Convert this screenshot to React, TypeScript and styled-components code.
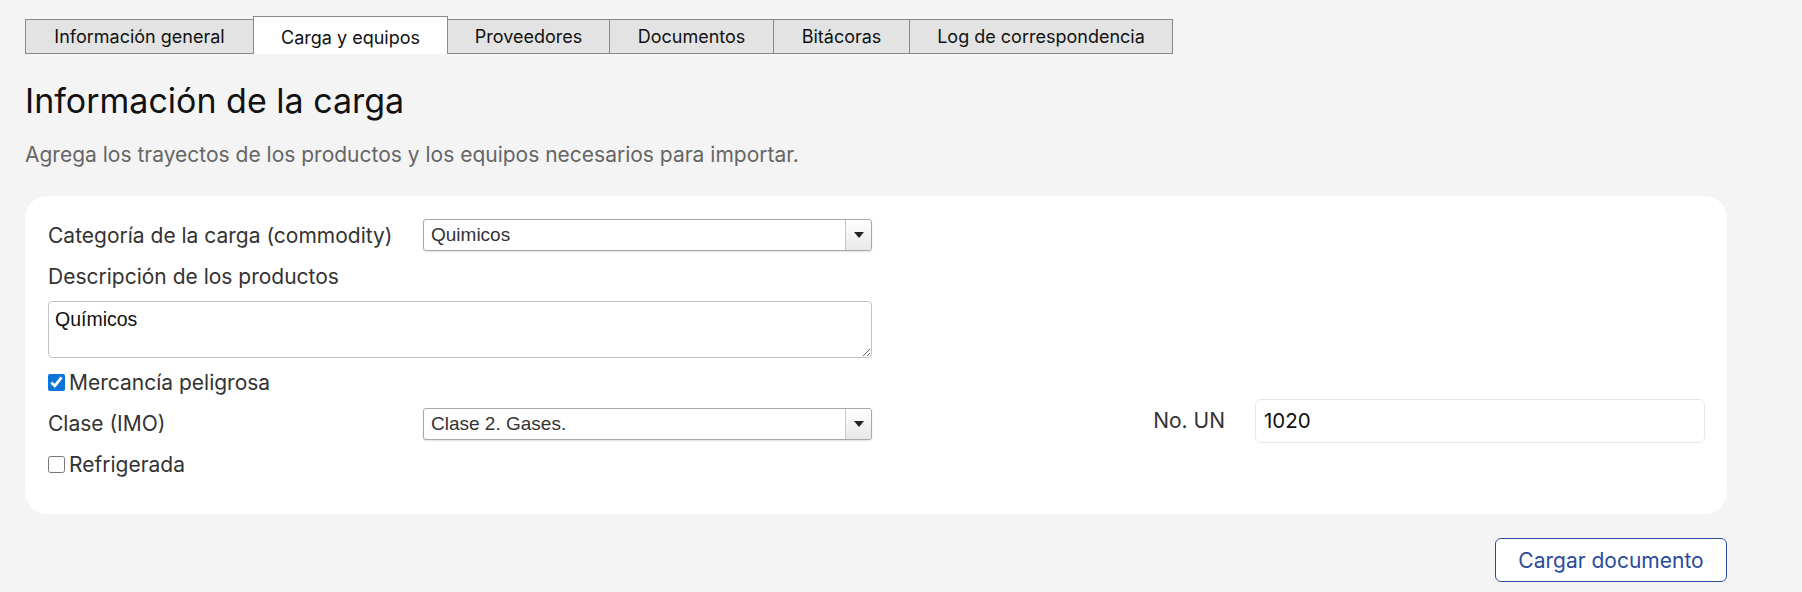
import React from 'react'
import styled, { createGlobalStyle } from 'styled-components'

const GlobalStyle = createGlobalStyle`
  body {
    margin: 0;
    background: #f4f4f4;
    font-family: Inter, "Noto Sans", sans-serif;
  }
`

const tabs = [
    { label: 'Información general', width: 229 },
    { label: 'Carga y equipos', width: 195, active: true },
    { label: 'Proveedores', width: 163 },
    { label: 'Documentos', width: 165 },
    { label: 'Bitácoras', width: 137 },
    { label: 'Log de correspondencia', width: 264 },
]

const App = () => {
    return (
        <Page>
            <GlobalStyle />
            <TabBar>
                {tabs.map((tab) => (
                    <Tab key={tab.label} $active={!!tab.active} $width={tab.width}>
                        {tab.label}
                    </Tab>
                ))}
            </TabBar>
            <Title>Información de la carga</Title>
            <Subtitle>Agrega los trayectos de los productos y los equipos necesarios para importar.</Subtitle>
            <Card>
                <Row>
                    <Field>
                        <Label>Categoría de la carga (commodity)</Label>
                        <Select>
                            <SelectValue>Quimicos</SelectValue>
                            <SelectArrow><Caret /></SelectArrow>
                        </Select>
                    </Field>
                </Row>
                <BlockLabel>Descripción de los productos</BlockLabel>
                <TextArea defaultValue="Químicos" />
                <CheckRow $top={11.5}>
                    <Check type="checkbox" defaultChecked />
                    Mercancía peligrosa
                </CheckRow>
                <Row $top={4}>
                    <Field $drop={6}>
                        <Label>Clase (IMO)</Label>
                        <Select>
                            <SelectValue>Clase 2. Gases.</SelectValue>
                            <SelectArrow><Caret /></SelectArrow>
                        </Select>
                    </Field>
                    <Spacer />
                    <SideLabel>No. UN</SideLabel>
                    <Input defaultValue="1020" />
                </Row>
                <CheckRow $top={9.5}>
                    <Check type="checkbox" />
                    Refrigerada
                </CheckRow>
            </Card>
            <Actions>
                <OutlineButton>Cargar documento</OutlineButton>
            </Actions>
        </Page>
    )
}

const Page = styled.div`
  padding: 16px 75px 0 25px;
`
const TabBar = styled.div`
  display: flex;
  align-items: flex-end;
  height: 38px;
`
const Tab = styled.div<{ $active: boolean; $width: number }>`
  box-sizing: border-box;
  width: ${(p) => p.$width}px;
  height: ${(p) => (p.$active ? 38 : 35)}px;
  display: flex;
  align-items: center;
  justify-content: center;
  padding-top: ${(p) => (p.$active ? 3 : 0)}px;
  font-size: 18px;
  color: #111;
  background: ${(p) => (p.$active ? '#ffffff' : '#e3e3e3')};
  border: 1px solid #8a8a8a;
  border-bottom: ${(p) => (p.$active ? 'none' : '1px solid #8a8a8a')};
  margin-left: -1px;
  &:first-child {
    margin-left: 0;
  }
`
const Title = styled.h1`
  margin: 26px 0 0;
  font-size: 34px;
  font-weight: 400;
  color: #111;
  line-height: 41px;
`
const Subtitle = styled.p`
  margin: 21px 0 0;
  font-size: 21px;
  color: #666;
  line-height: 25px;
`
const Card = styled.div`
  margin-top: 29px;
  background: #fff;
  border-radius: 22px;
  padding: 23px 22px 37px 23px;
`
const Row = styled.div<{ $top?: number }>`
  display: flex;
  align-items: center;
  margin-top: ${(p) => p.$top ?? 0}px;
`
const Field = styled.div<{ $drop?: number }>`
  display: flex;
  align-items: center;
  padding-top: ${(p) => p.$drop ?? 0}px;
`
const Label = styled.div`
  width: 375px;
  font-size: 21px;
  color: #333;
`
const Select = styled.div`
  box-sizing: border-box;
  width: 449px;
  height: 32px;
  display: flex;
  border: 1px solid #a8a8a8;
  border-radius: 3px;
  box-shadow: 0 1px 2px rgba(0, 0, 0, 0.12);
  background: #fff;
`
const SelectValue = styled.div`
  flex: 1;
  display: flex;
  align-items: center;
  padding-left: 7px;
  font-family: "Liberation Sans", Arial, sans-serif;
  font-size: 19px;
  color: #333;
`
const SelectArrow = styled.div`
  width: 25px;
  display: flex;
  align-items: center;
  justify-content: center;
  border-left: 1px solid #c8c8c8;
  background: linear-gradient(#fff, #e8e8e8);
  border-radius: 0 3px 3px 0;
`
const Caret = styled.span`
  width: 0;
  height: 0;
  border-left: 5px solid transparent;
  border-right: 5px solid transparent;
  border-top: 6px solid #222;
`
const BlockLabel = styled.div`
  margin-top: 13px;
  font-size: 21px;
  color: #333;
  line-height: 25px;
`
const TextArea = styled.textarea`
  box-sizing: border-box;
  display: block;
  margin-top: 11.5px;
  width: 824px;
  height: 57.5px;
  padding: 6px 6px;
  border: 1px solid #c4c4c4;
  border-radius: 4px;
  font-family: "Liberation Sans", Arial, sans-serif;
  font-size: 19.5px;
  color: #111;
  resize: vertical;
  outline: none;
`
const CheckRow = styled.label<{ $top: number }>`
  display: flex;
  align-items: center;
  gap: 4px;
  margin-top: ${(p) => p.$top}px;
  font-size: 21px;
  color: #333;
  line-height: 25px;
`
const Check = styled.input`
  width: 17px;
  height: 17px;
  margin: 0;
  accent-color: #0b75d9;
`
const Spacer = styled.div`
  flex: 1;
`
const SideLabel = styled.div`
  font-size: 21px;
  color: #333;
  margin-right: 30px;
`
const Input = styled.input`
  box-sizing: border-box;
  width: 450px;
  height: 44px;
  padding: 0 8px;
  border: 1px solid #e6e6e6;
  border-radius: 6px;
  font-family: Inter, sans-serif;
  font-size: 20.5px;
  color: #111;
  outline: none;
`
const Actions = styled.div`
  display: flex;
  justify-content: flex-end;
  margin-top: 24px;
`
const OutlineButton = styled.button`
  box-sizing: border-box;
  width: 232px;
  height: 44px;
  background: #fff;
  border: 1px solid #2b4a9c;
  border-radius: 6px;
  font-family: Inter, sans-serif;
  font-size: 21px;
  color: #2b4a9c;
`

export default App
